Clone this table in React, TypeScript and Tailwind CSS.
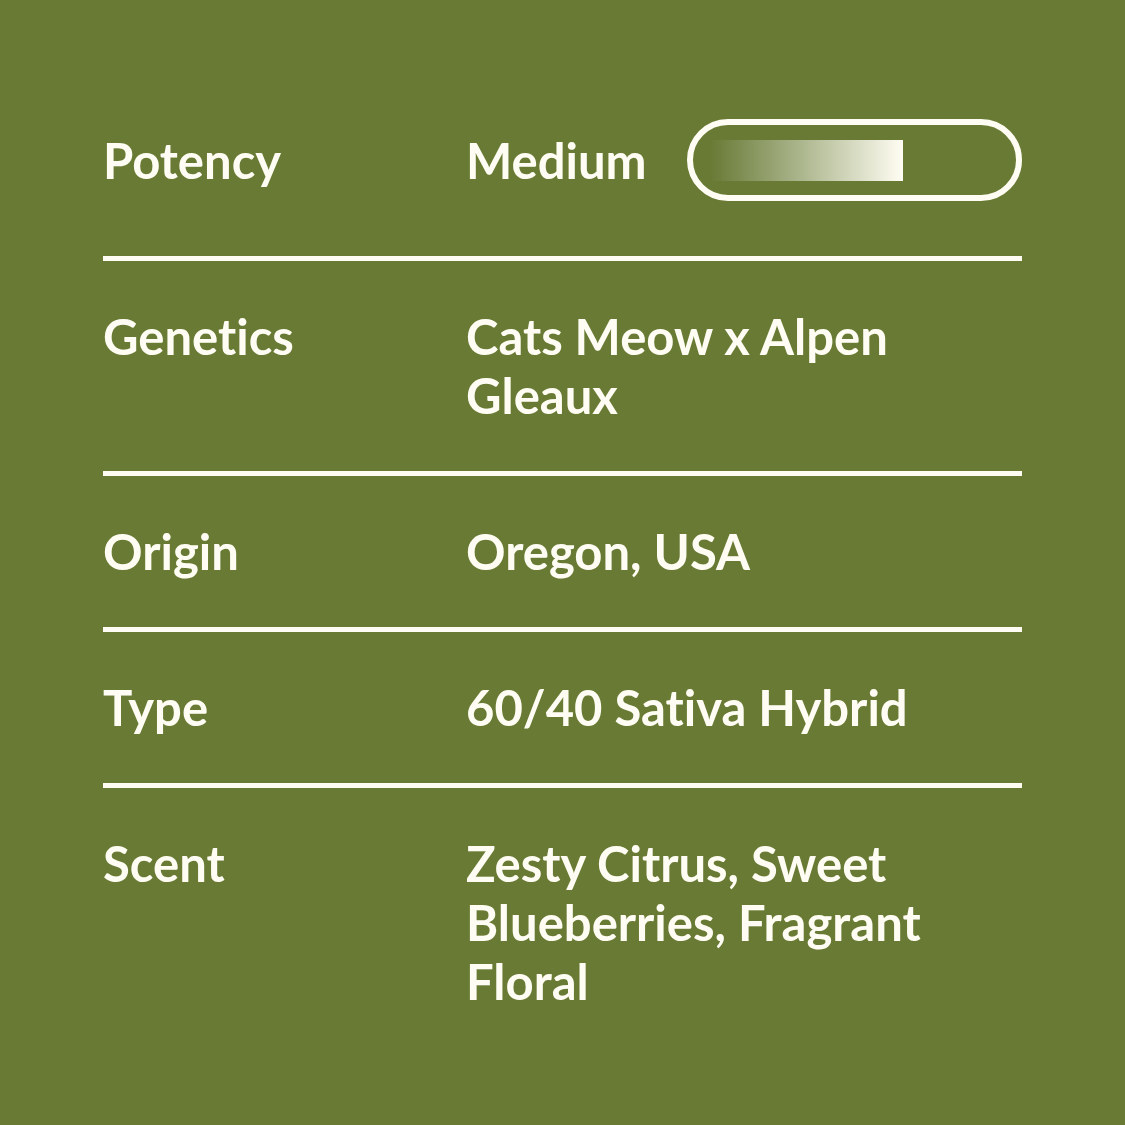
export default function App() {
  const rows = [
    { label: 'Genetics', value: 'Cats Meow x Alpen Gleaux' },
    { label: 'Origin', value: 'Oregon, USA' },
    { label: 'Type', value: '60/40 Sativa Hybrid' },
    { label: 'Scent', value: 'Zesty Citrus, Sweet Blueberries, Fragrant Floral' },
  ];

  return (
    <div
      className="w-[1125px] h-[1125px] bg-[#687a34] px-[103px] pt-[119px] text-[#fffdf3] font-bold text-[49px] leading-[59px] [font-variant-ligatures:none]"
      style={{ fontFamily: 'Lato, "Liberation Sans", sans-serif' }}
    >
      <div className="grid grid-cols-[363px_1fr] items-center pb-[55px]">
        <div>Potency</div>
        <div className="flex items-center">
          <span>Medium</span>
          <div className="ml-auto w-[335px] h-[82px] rounded-full border-[6px] border-[#fffdf3] pl-[17px] flex items-center">
            <div className="w-[193px] h-[41px] bg-linear-to-r from-[#687a34] to-[#fffdf3]" />
          </div>
        </div>
      </div>

      {rows.map((row) => (
        <div key={row.label}>
          <div className="h-[5px] bg-[#fffdf3]" />
          <div className="grid grid-cols-[363px_1fr] py-[46px]">
            <div>{row.label}</div>
            <div className="max-w-[500px]">{row.value}</div>
          </div>
        </div>
      ))}
    </div>
  );
}
